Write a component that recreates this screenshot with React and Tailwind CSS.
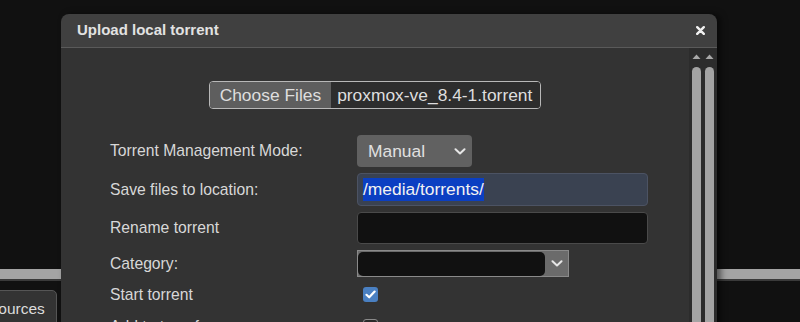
import React from 'react';

function Chevron({ className }) {
  return (
    <svg width="12" height="7" viewBox="0 0 12 7" className={className}>
      <path d="M1.5 1.2 L6 5.5 L10.5 1.2" fill="none" stroke="#e6e6e6" strokeWidth="2" strokeLinecap="round" strokeLinejoin="round" />
    </svg>
  );
}

function ScrollBar() {
  return (
    <div className="flex flex-col items-center w-[9px]">
      <svg width="9" height="5" viewBox="0 0 9 5" className="mt-[6px]">
        <path d="M0.5 5 L4.5 0.5 L8.5 5 Z" fill="#a8a8a8" />
      </svg>
      <div className="mt-[8px] w-[9px] flex-1 bg-[#a4a4a4] rounded-t-full" />
    </div>
  );
}

export default function App() {
  return (
    <div className="relative w-[800px] h-[322px] overflow-hidden bg-[#111] font-['Liberation_Sans',Arial,sans-serif]">
      {/* Page behind the dialog */}
      <div className="flex flex-col h-full">
        <div className="h-[269px] shrink-0" />
        <div className="h-[10px] shrink-0 bg-[#a4a4a4]" />
        <div className="h-[2px] shrink-0 bg-[#3a3a3a]" />
        <div className="flex shrink-0 pt-[9px]">
          <div className="ml-[-24px] w-[81px] shrink-0 pl-[11px] pt-[6px] h-[40px] bg-[#333] border border-[#555] rounded-tr-[5px] text-[15.5px] text-[#dcdcdc] whitespace-nowrap">
            Sources
          </div>
        </div>
      </div>

      {/* Dialog */}
      <div className="absolute left-[61px] top-[14px] w-[656px] h-[340px] rounded-[8px] overflow-hidden flex flex-col shadow-[4px_0_6px_rgba(0,0,0,0.5)]">
        <div className="h-[34px] shrink-0 bg-[#404040] border-b border-[#5a5a5a] flex items-center justify-between pl-[16px] pr-[12px]">
          <span className="text-[15px] font-bold text-[#e2e2e2]">Upload local torrent</span>
          <svg width="9" height="9" viewBox="0 0 9 9">
            <path d="M1.2 1.2 L7.8 7.8 M7.8 1.2 L1.2 7.8" stroke="#f0f0f0" strokeWidth="2.4" strokeLinecap="round" />
          </svg>
        </div>

        <div className="flex flex-1 bg-[#333]">
          <div className="flex-1 flex flex-col pt-[33px]">
            {/* File chooser */}
            <div className="mx-auto flex h-[28px] border border-[#b8b8b8] rounded-[4px] overflow-hidden text-[17.4px] text-[#dedede]">
              <div className="flex items-center px-[10px] bg-[#5e5e5e]">Choose Files</div>
              <div className="flex items-center pl-[6px] pr-[8px] bg-[#2d2d2d]">proxmox-ve_8.4-1.torrent</div>
            </div>

            {/* Form */}
            <div className="mt-[26px] pl-[49px] grid grid-cols-[247px_291px] gap-y-[6px] text-[15.7px] text-[#d8d8d8]">
              <div className="h-[32px] flex items-center">Torrent Management Mode:</div>
              <div className="h-[32px] flex">
                <div className="w-[115px] h-[32px] bg-[#616161] rounded-[4px] flex items-center justify-between pl-[11px] pr-[6px] text-[17.4px] text-[#e0e0e0]">
                  <span>Manual</span>
                  <Chevron />
                </div>
              </div>

              <div className="h-[33px] flex items-center">Save files to location:</div>
              <div className="h-[33px] bg-[#3a4251] border border-[#4c5363] rounded-[4px] flex items-center px-[5px]">
                <span className="inline-block h-[23px] leading-[23px] bg-[#0b3fc2] text-[17.4px] text-[#f2f2f2]">/media/torrents/</span>
              </div>

              <div className="h-[32px] flex items-center">Rename torrent</div>
              <div className="h-[32px] bg-[#111] border border-[#4a4a4a] rounded-[4px]" />

              <div className="h-[27px] flex items-center">Category:</div>
              <div className="h-[27px] flex">
                <div className="w-[212px] h-[27px] bg-[#6b6b6b] border border-[#8a8a8a] flex items-center">
                  <div className="w-[187px] h-[24px] bg-[#111] rounded-[5px]" />
                  <div className="flex-1 flex justify-center">
                    <Chevron />
                  </div>
                </div>
              </div>

              <div className="h-[23px] flex items-center">Start torrent</div>
              <div className="h-[23px] flex items-center">
                <div className="ml-[6px] w-[15px] h-[15px] rounded-[3px] bg-[#4a80c2] flex items-center justify-center">
                  <svg width="11" height="9" viewBox="0 0 11 9">
                    <path d="M1.5 4.8 L4.2 7.3 L9.6 1.6" fill="none" stroke="#fff" strokeWidth="2.2" strokeLinecap="round" strokeLinejoin="round" />
                  </svg>
                </div>
              </div>

              <div className="mt-[3px] h-[23px] flex items-center">Add to top of queue</div>
              <div className="mt-[3px] h-[23px] flex items-center">
                <div className="ml-[6px] w-[15px] h-[15px] rounded-[3px] border border-[#8a8a8a] bg-[#2a2a2a]" />
              </div>
            </div>
          </div>

          {/* Scrollbars */}
          <div className="w-[28px] bg-[#2c2c2c] flex gap-[4px] pl-[3px]">
            <ScrollBar />
            <ScrollBar />
          </div>
        </div>
      </div>
    </div>
  );
}
